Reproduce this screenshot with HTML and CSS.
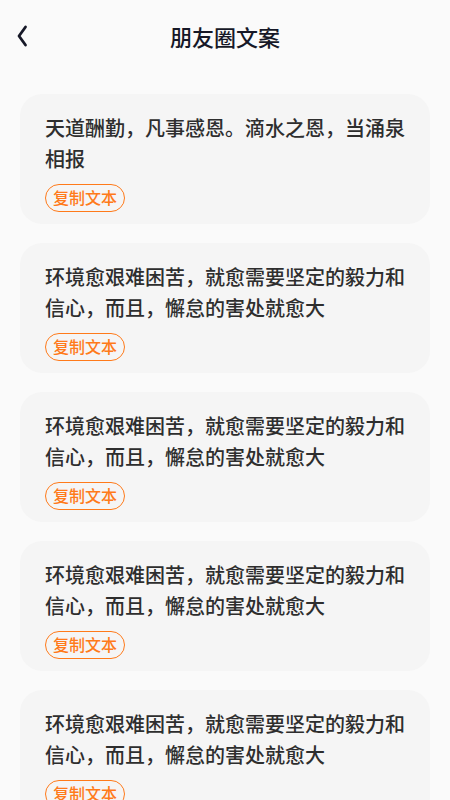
FILE: index.html
```html
<!DOCTYPE html>
<html lang="zh-CN">
<head>
<meta charset="utf-8">
<meta name="viewport" content="width=450">
<title>朋友圈文案</title>
<link rel="stylesheet" href="styles.css">
</head>
<body>
<header class="topbar">
  <span class="back" aria-label="返回">
    <svg width="12" height="22" viewBox="0 0 12 22"><path d="M9.5 2 L3 11 L9.5 20" fill="none" stroke="#161827" stroke-width="2.8" stroke-linecap="round" stroke-linejoin="round"/></svg>
  </span>
  <h1 class="title">朋友圈文案</h1>
</header>
<main class="list">
  <section class="card">
    <p class="text">天道酬勤，凡事感恩。滴水之恩，当涌泉相报</p>
    <span class="copy">复制文本</span>
  </section>
  <section class="card">
    <p class="text">环境愈艰难困苦，就愈需要坚定的毅力和信心，而且，懈怠的害处就愈大</p>
    <span class="copy">复制文本</span>
  </section>
  <section class="card">
    <p class="text">环境愈艰难困苦，就愈需要坚定的毅力和信心，而且，懈怠的害处就愈大</p>
    <span class="copy">复制文本</span>
  </section>
  <section class="card">
    <p class="text">环境愈艰难困苦，就愈需要坚定的毅力和信心，而且，懈怠的害处就愈大</p>
    <span class="copy">复制文本</span>
  </section>
  <section class="card">
    <p class="text">环境愈艰难困苦，就愈需要坚定的毅力和信心，而且，懈怠的害处就愈大</p>
    <span class="copy">复制文本</span>
  </section>
</main>
</body>
</html>
```
FILE: styles.css
```css
html, body {
  margin: 0;
  padding: 0;
}
body {
  background: #fafafa;
  font-family: "Noto Sans CJK SC", "Noto Sans", sans-serif;
  width: 450px;
  overflow: hidden;
}
.topbar {
  height: 72px;
  display: flex;
  align-items: center;
  justify-content: center;
  position: relative;
}
.back {
  position: absolute;
  left: 16px;
  top: 25px;
  width: 12px;
  height: 22px;
  display: block;
}
.back svg { display: block; }
.title {
  margin: 0;
  font-size: 22px;
  font-weight: 500;
  color: #161827;
  line-height: 72px;
}
.list {
  padding: 22px 20px 0;
  display: flex;
  flex-direction: column;
  gap: 19px;
}
.card {
  background: #f5f5f5;
  border-radius: 22px;
  padding: 18px 25px 12px;
  height: 130px;
  box-sizing: border-box;
}
.text {
  margin: 0;
  font-size: 20px;
  line-height: 31px;
  font-weight: 500;
  color: #2e2e2e;
}
.copy {
  display: inline-block;
  margin-top: 10px;
  height: 28px;
  box-sizing: border-box;
  padding: 0 7px;
  border: 1.6px solid #ff7a1a;
  border-radius: 14px;
  color: #ff7a1a;
  font-size: 16px;
  line-height: 25px;
  font-weight: 500;
}
```
